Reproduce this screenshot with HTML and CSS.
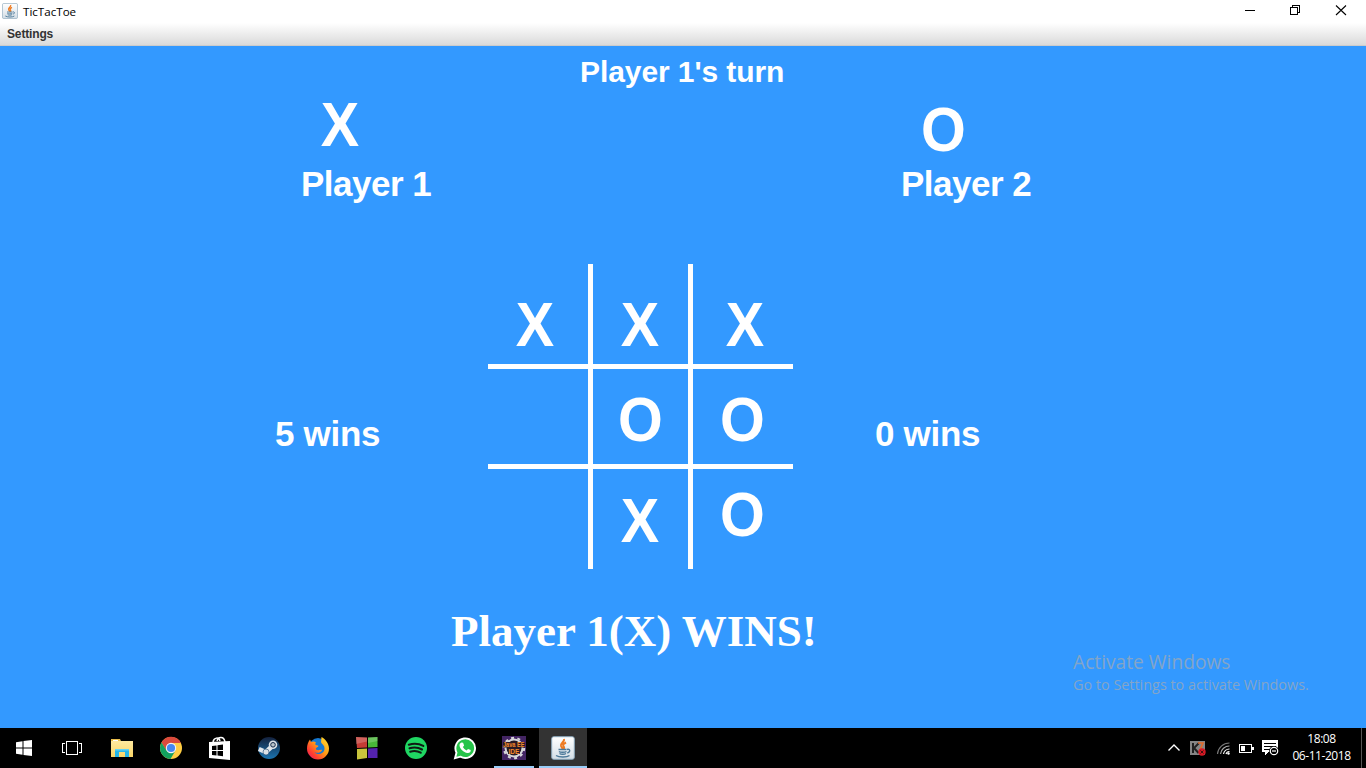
FILE: index.html
```html
<!DOCTYPE html>
<html lang="en">
<head>
<meta charset="utf-8">
<title>TicTacToe</title>
<link rel="stylesheet" href="styles.css">
</head>
<body>
<svg width="0" height="0" class="defs" aria-hidden="true">
  <defs>
    <linearGradient id="tile" x2="0" y2="1"><stop stop-color="#fff"/><stop offset="1" stop-color="#d3dde5"/></linearGradient>
    <linearGradient id="folder" x2="0" y2="1"><stop stop-color="#ffe9a0"/><stop offset="1" stop-color="#f9d566"/></linearGradient>
    <linearGradient id="steam" x2="0" y2="1"><stop stop-color="#14213d"/><stop offset="1" stop-color="#1b74b0"/></linearGradient>
    <linearGradient id="fox" x1="1" x2="0" y2="1"><stop stop-color="#ffe832"/><stop offset=".45" stop-color="#ff9a16"/><stop offset=".75" stop-color="#ff3b32"/><stop offset="1" stop-color="#e01576"/></linearGradient>
    <symbol id="java" viewBox="0 0 24 24">
      <rect x=".7" y=".7" width="22.6" height="22.6" rx="2" fill="url(#tile)" stroke="#8da9bd"/>
      <path d="M13 3c1 3-4 4-3 7 .4 1 1.500 2 1.500 3M15 6.500c-4 2-3 3-2 4.500.6 1 0 1.600-.6 2.200" fill="none" stroke="#ee7b22" stroke-width="2"/>
      <path d="M7.500 13.500h8M8 15.500c1 1 6 1 7.500 0M8.500 17.500c1.500 1 5 1 6.500 0M5 19.500c3 2 11 2 13.500 0M16 13.500c3-1 4 2 .3 3.500" fill="none" stroke="#4b7898" stroke-width="1.400"/>
    </symbol>
  </defs>
</svg>
<div class="window">
  <header class="titlebar">
    <svg class="app-icon"><use href="#java"/></svg>
    <span class="app-title">TicTacToe</span>
    <svg class="caption-buttons" viewBox="0 0 138 22" shape-rendering="crispEdges">
      <path d="M17 10.500h10" stroke="#000"/>
      <path d="M62.500 7.500h7v7h-7zM64.500 7V5.500h7v7H70" fill="none" stroke="#000"/>
      <path d="M108 5.500l10 9.500M118 5.500l-10 9.500" fill="none" stroke="#000" stroke-width="1.100" shape-rendering="auto"/>
    </svg>
  </header>
  <nav class="menubar"><span>Settings</span></nav>
  <main class="stage">
    <h1 class="turn">Player 1's turn</h1>
    <section class="players">
      <div class="player"><span class="mark mark-x"><b class="glyph">X</b></span><span class="name">Player 1</span></div>
      <div class="player"><span class="mark mark-o"><b class="glyph">O</b></span><span class="name">Player 2</span></div>
    </section>
    <section class="match">
      <p class="wins">5 wins</p>
      <div class="board">
        <div class="cell x top left"><b class="glyph">X</b></div>
        <div class="cell x top mid"><b class="glyph">X</b></div>
        <div class="cell x top right"><b class="glyph">X</b></div>
        <div class="cell o middle mid"><b class="glyph">O</b></div>
        <div class="cell o middle right"><b class="glyph">O</b></div>
        <div class="cell x bottom mid"><b class="glyph">X</b></div>
        <div class="cell o bottom right"><b class="glyph">O</b></div>
        <div class="bar row upper"></div><div class="bar row lower"></div>
        <div class="bar col first"></div><div class="bar col second"></div>
      </div>
      <p class="wins">0 wins</p>
    </section>
    <p class="result">Player 1(X) WINS!</p>
    <aside class="activate"><strong>Activate Windows</strong><span>Go to Settings to activate Windows.</span></aside>
  </main>
  <footer class="taskbar">
    <div class="task narrow"><svg viewBox="0 0 24 24"><path fill="#fff" d="M4 6.200l6.500-.9v6.200H4zM11.500 5.100L20 4v7.500h-8.500zM4 12.500h6.500v6.200L4 17.800zM11.500 12.500H20V20l-8.500-1.100z"/></svg></div>
    <div class="task narrow"><svg viewBox="0 0 24 24" fill="none" stroke="#fff" shape-rendering="crispEdges"><path d="M6.500 5.500h11v13h-11zM5 7.500H2.500v9H5M19 7.500h2.500v9H19"/></svg></div>
    <div class="task"><svg viewBox="0 0 24 24"><path fill="#e9bd4c" d="M1 3h9l1 2h11v4H1z"/><path fill="url(#folder)" d="M1 5h22v16H1z"/><path fill="#fff" d="M3 4h5v1H3z"/><path fill="#25b7e8" d="M5 13h14v8h-4v-5H9v5H5z"/><path fill="#65d2f3" d="M5 13h14v1.500H5z"/></svg></div>
    <div class="task"><svg viewBox="0 0 24 24"><circle cx="12" cy="12" r="11" fill="#ffcd42"/><path fill="#db4a3c" d="M2.500 6.500A11 11 0 0 1 22 7H12l-5 7z"/><path fill="#12a15f" d="M2.500 6.500A11 11 0 0 0 11.500 23L16.500 14.500 7.500 14.500z"/><circle cx="12" cy="12" r="5.200" fill="#f4f4f4"/><circle cx="12" cy="12" r="4.100" fill="#4688f1"/></svg></div>
    <div class="task"><svg viewBox="0 0 24 24"><path d="M5 6c1-5 6-5 7-1M9 5c1-4.500 7-5 8 1" fill="none" stroke="#fff" stroke-width="1.500"/><path fill="#fff" d="M1 6l21-1v19L1 22z"/><path fill="#000" d="M4 10l4.500-.6v4.500H4zM9.500 9.200l5.500-.7v5.400H9.500zM4 15h4.500v4.400L4 18.900zM9.500 15H15v5.300l-5.500-.8z"/></svg></div>
    <div class="task"><svg viewBox="0 0 24 24"><circle cx="12" cy="12" r="11" fill="url(#steam)"/><path stroke="#e2e7ec" stroke-width="4.500" d="M1.800 13l7 3L16 9.500" fill="none"/><circle cx="16" cy="8.800" r="4.300" fill="#dce1e6"/><circle cx="16" cy="8.800" r="2.300" fill="#b9c3ca" stroke="#172c4c"/><circle cx="9" cy="16" r="3" fill="#dce1e6" stroke="#1a456f" stroke-width=".6"/></svg></div>
    <div class="task"><svg viewBox="0 0 24 24"><circle cx="12" cy="11" r="9" fill="#1679d2"/><path fill="url(#fox)" d="M15.500 1c3.500 2 7.500 6 7.500 11.500A11 11 0 0 1 1 12.500C1 9 2 6 4 3.500L5 6c2-1 4-.6 5 .5-1 1-.8 2-.2 2.500l2.700.7c-.2 1.500-2.700 1.800-2.700 3 1 2.600 5.200.8 6.200 1.200-.7 2.500-4.800 3.800-7.500 2 2 3.500 9.500 2.500 10-3 .3-4-2.500-4.300-3.500-7z"/></svg></div>
    <div class="task"><svg viewBox="0 0 24 24"><path fill="#c63c35" d="M1 1l11 .5v10L2 12z"/><path fill="#48b638" d="M13 1.500L22.500 1v10l-9.500.5z"/><path fill="#c9c43c" d="M2 13l10-.5v9.500L2 23.500z"/><path fill="#5422ae" d="M13 12.500l9.500-.5v10L13 22z"/><path fill="#fff" opacity=".2" d="M1 1l11 .5v4L1 8zM13 1.500l9.500-.5v4l-9.500 2z"/></svg></div>
    <div class="task"><svg viewBox="0 0 24 24"><circle cx="12" cy="12" r="11" fill="#1fd662"/><path d="M4.800 8.700c5-1.600 10.500-1 14.500 1.200M5.500 12.300c4.300-1.300 9-.8 12.500 1.200M6.200 15.700c3.700-1.100 7.500-.7 10.500 1" fill="none" stroke="#101a13" stroke-width="2.100" stroke-linecap="round"/></svg></div>
    <div class="task"><svg viewBox="0 0 24 24"><path d="M2 22.200l1.500-5.600A9.800 9.800 0 1 1 7.400 20.700z" fill="#27c44a" stroke="#fff" stroke-width="1.900"/><path fill="#fff" d="M8.500 6.600l1.600.2 1 2.600-1.200 1.500c.8 1.600 2 2.700 3.700 3.500l1.400-1.500 2.700 1.200c.3 2-1.500 3.200-3.200 2.900-4-.6-7.600-4-8-7.500-.1-1.200.7-2.500 2-2.900z"/></svg></div>
    <div class="task open"><svg viewBox="0 0 24 24"><path fill="#432563" d="M0 0h24v24H0z"/><circle cx="12" cy="12" r="8.500" fill="#241a25" stroke="#d8d8da" stroke-width="2"/><circle cx="12" cy="12" r="10.200" fill="none" stroke="#d8d8da" stroke-width="2" stroke-dasharray="3 3.400"/><path fill="#2b1a25" d="M1 6h22v5.500H1zM6 12h12v6H6z"/><g fill="#f58a2c" font-family="Liberation Sans" font-weight="bold"><text x="1" y="11" font-size="6.500" textLength="21.500" lengthAdjust="spacingAndGlyphs">Java EE</text><text x="6.500" y="17.500" font-size="6.500" textLength="11" lengthAdjust="spacingAndGlyphs">IDE</text></g></svg></div>
    <div class="task open active"><svg><use href="#java"/></svg></div>
    <div class="tray">
      <svg class="tray-icons" viewBox="0 0 116 24">
        <path d="M3.500 14.500L9 9l5.500 5.500" fill="none" stroke="#fff" stroke-width="1.400"/>
        <path fill="#858585" d="M25 5h15v14H25z"/><path d="M28 7v10M34 7l-5 5 4.500 5" stroke="#202020" stroke-width="2" fill="none"/><path d="M33 7h5l-3 7" stroke="#e26b2b" stroke-width="1.700" fill="none"/><circle cx="37" cy="16" r="3.700" fill="#d51924"/><path d="M35.500 14.500l3 3M38.500 14.500l-3 3" stroke="#401010"/>
        <g fill="none" stroke-width="1.200"><path stroke="#777" d="M52.500 18A12 12 0 0 1 64.500 7"/><path stroke="#aaa" d="M55.500 18A9 9 0 0 1 64.500 10"/><path stroke="#fff" d="M58.500 18A6 6 0 0 1 64.500 13M61 18A3.500 3.500 0 0 1 64.500 15.500"/></g><circle cx="63.500" cy="17.500" r="1.200" fill="#fff"/>
        <g shape-rendering="crispEdges"><path d="M74.500 8.500h12v8h-12z" fill="none" stroke="#fff"/><path d="M76 10h4v5h-4zM87 11h2v3h-2z" fill="#fff"/><path d="M97 4h16v12h-10l-3 3v-3h-3z" fill="#fff"/><path d="M99 7.500h12M99 10.500h12M99 13.500h7" stroke="#000"/></g><circle cx="109" cy="15" r="5" fill="#000"/><circle cx="109" cy="15" r="3.700" fill="#000" stroke="#fff" stroke-width="1.200"/><path d="M107 15h4" stroke="#fff" stroke-width="1.200"/>
      </svg>
      <div class="clock"><span>18:08</span><span>06-11-2018</span></div>
    </div>
  </footer>
</div>
</body>
</html>
```
FILE: styles.css
```css
* { box-sizing: border-box; }
body { margin: 0; font-family: "Liberation Sans", sans-serif; overflow: hidden; }
p, h1 { margin: 0; }
.defs { position: absolute; }
.window { width: 1366px; height: 768px; display: flex; flex-direction: column; }

.titlebar { height: 23px; display: flex; align-items: flex-start; padding-left: 2px; background: #fff; }
.app-icon { width: 16px; height: 16px; margin-top: 3px; }
.app-title { margin: 3px auto 0 5px; font: 11.6px/17px "Open Sans", sans-serif; color: #000; }
.caption-buttons { width: 138px; height: 22px; }
.menubar { height: 23px; padding-left: 7px; font-size: 12px; letter-spacing: -.15px; font-weight: bold; line-height: 22px; color: #333; background: linear-gradient(#fff, #dadada); border-bottom: 1px solid #ccc; }

.stage { height: 682px; background: #39f; color: #fff; font-weight: bold; display: flex; flex-direction: column; }
.turn { margin: 11px 0 0 580px; font-size: 30px; line-height: 30px; letter-spacing: -.08px; }
.players { display: grid; grid-template-columns: 600px 600px; height: 177px; }
.player { display: flex; flex-direction: column; padding-left: 300px; }
.mark { font-size: 60px; line-height: 60px; height: 71px; padding-left: 20px; }
.mark-x { margin-top: 8px; }
.mark-o { margin-top: 13px; height: 66px; }
.glyph { display: block; width: fit-content; height: 60px; transform: scale(.96, 1.05); }
.name { font-size: 35px; line-height: 35px; letter-spacing: -.5px; padding-left: 1px; }
.match { display: grid; grid-template-columns: 213px 387px auto; padding-left: 275px; height: 305px; }
.wins { font-size: 35px; line-height: 35px; letter-spacing: -.3px; padding-top: 152px; }
.board { width: 305px; height: 305px; display: grid; grid-template: 100px 5px 95px 5px 100px / 100px 5px 95px 5px 100px; }
.cell { font-size: 60px; line-height: 60px; }
.top { grid-row: 1; padding-top: 31px; }
.middle { grid-row: 3; padding-top: 21px; }
.bottom { grid-row: 5; }
.bottom.x { padding-top: 22px; }
.bottom.o { padding-top: 16px; }
.left { grid-column: 1; padding-left: 27px; }
.mid { grid-column: 3; padding-left: 27px; }
.mid.o { padding-left: 24px; }
.right { grid-column: 5; padding-left: 32px; }
.right.o { padding-left: 26px; }
.bar { background: #fff; }
.bar.row { grid-column: 1 / -1; }
.upper { grid-row: 2; }
.lower { grid-row: 4; }
.bar.col { grid-row: 1 / -1; }
.first { grid-column: 2; }
.second { grid-column: 4; }
.result { margin: 40px 0 0 451px; font: bold 45px/45px "Liberation Serif", serif; }
.activate { display: flex; flex-direction: column; margin: -4px 0 0 1073px; font-family: "Open Sans", sans-serif; font-weight: 400; color: #83a5c8; white-space: nowrap; }
.activate strong { font-size: 19.2px; line-height: 24px; font-weight: 400; }
.activate span { font-size: 14.4px; line-height: 21px; }

.taskbar { height: 40px; background: #000; display: flex; }
.task { width: 49px; display: flex; align-items: center; justify-content: center; }
.task svg { width: 24px; height: 24px; }
.task.narrow { width: 48px; }
.task.narrow + .task:not(.narrow) { margin-left: 1px; }
.open { width: 40px; margin: 0 5px; box-shadow: inset 0 -2px #99cdf8; }
.open.active { width: 48px; margin: 0; background: #333; }
.tray { display: flex; margin-left: auto; align-items: center; padding-right: 4px; }
.tray-icons { width: 116px; height: 24px; }
.clock { width: 78px; margin-left: 3px; padding-right: 2px; height: 40px; display: flex; flex-direction: column; align-items: center; padding-top: 2px; border-right: 1px solid #555; color: #fff; font: 12px/17px "Open Sans", sans-serif; letter-spacing: -.45px; }
```
